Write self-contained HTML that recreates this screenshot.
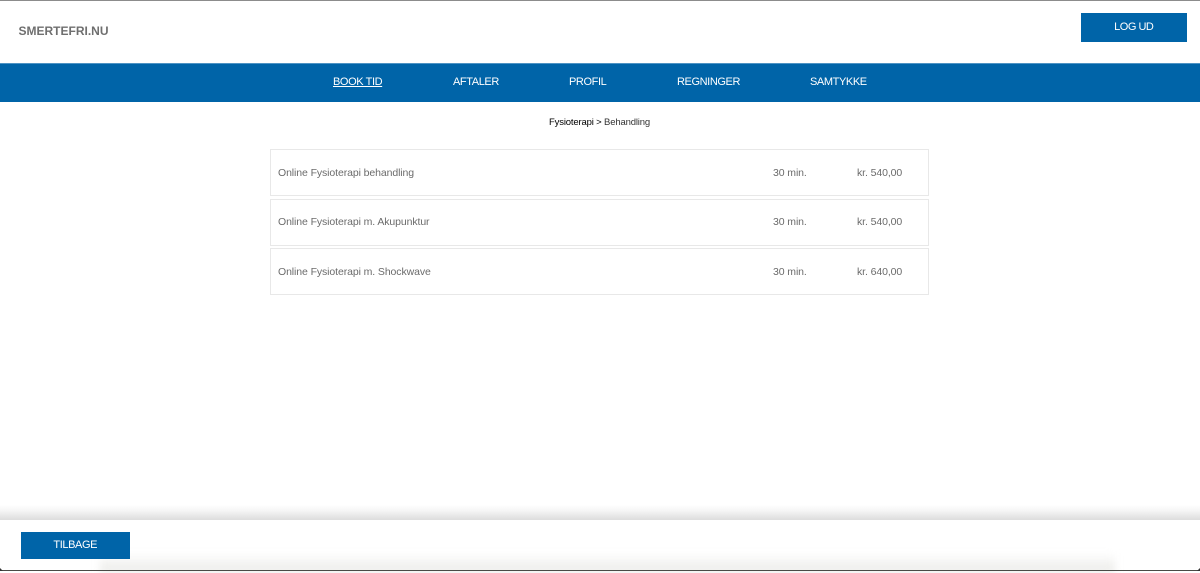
<!DOCTYPE html>
<html lang="da">
<head>
<meta charset="utf-8">
<title>Smertefri.nu</title>
<style>
html,body{margin:0;padding:0;width:1200px;height:571px;overflow:hidden;background:#fff;font-family:"Liberation Sans",Arial,sans-serif;}
.abs{position:absolute;white-space:nowrap;}
#top{position:absolute;left:0;top:0;width:1200px;height:1px;background:#8c8c8c;}
#logo{left:18.5px;top:24px;font-size:12px;line-height:15px;font-weight:bold;color:#6f6f6f;}
#logout{position:absolute;left:1080.5px;top:13px;width:106.5px;height:29px;background:#0064a8;color:#fff;font-size:11px;letter-spacing:-.5px;line-height:28px;text-align:center;}
#nav{position:absolute;left:0;top:63px;width:1200px;height:39px;background:#0064a8;border-top:1px solid #4d93c4;box-sizing:border-box;}
.n{top:76px;font-size:11px;letter-spacing:-.4px;line-height:13px;color:#fff;}
#crumb{left:549px;top:117px;font-size:9.5px;letter-spacing:-.16px;line-height:12px;color:#333;}
#crumb b{font-weight:normal;color:#000;}
.row{position:absolute;left:270px;width:659px;height:47px;box-sizing:border-box;border:1px solid #e8e8e8;background:#fff;}
.t{font-size:10.5px;letter-spacing:-.1px;line-height:13px;color:#6b6b6b;}
#shadow{position:absolute;left:0;top:505px;width:1200px;height:15px;background:linear-gradient(to bottom,#fff 0,#f6f6f6 35%,#dcdcdc 100%);}
#foot{position:absolute;left:0;top:520px;width:1200px;height:50px;background:#fff;}
#fade{position:absolute;left:100px;top:553px;width:1015px;height:20px;background:linear-gradient(to bottom,#fff,#e9e9e6);filter:blur(4px);}
#bottom{position:absolute;left:0;top:570px;width:1200px;height:1px;background:#4a4a46;}
.c{position:absolute;top:568px;width:3px;height:3px;background:#333;}
#back{position:absolute;left:20.5px;top:531.5px;width:109.5px;height:27.5px;background:#0064a8;color:#fff;font-size:11px;letter-spacing:-.4px;line-height:27px;text-align:center;}
</style>
</head>
<body>
<div id="top"></div>
<div class="abs" id="logo">SMERTEFRI.NU</div>
<div id="logout">LOG UD</div>
<div id="nav"></div>
<div class="abs n" style="left:333px;text-decoration:underline;">BOOK TID</div>
<div class="abs n" style="left:453px;">AFTALER</div>
<div class="abs n" style="left:569px;">PROFIL</div>
<div class="abs n" style="left:677px;">REGNINGER</div>
<div class="abs n" style="left:810px;">SAMTYKKE</div>
<div class="abs" id="crumb"><b>Fysioterapi &gt;</b> Behandling</div>
<div class="row" style="top:149px;"></div>
<div class="row" style="top:199px;"></div>
<div class="row" style="top:248px;"></div>
<div class="abs t" style="left:278px;top:167px;">Online Fysioterapi behandling</div>
<div class="abs t" style="left:773px;top:167px;">30 min.</div>
<div class="abs t" style="left:857px;top:167px;">kr. 540,00</div>
<div class="abs t" style="left:278px;top:216px;">Online Fysioterapi m. Akupunktur</div>
<div class="abs t" style="left:773px;top:216px;">30 min.</div>
<div class="abs t" style="left:857px;top:216px;">kr. 540,00</div>
<div class="abs t" style="left:278px;top:266px;">Online Fysioterapi m. Shockwave</div>
<div class="abs t" style="left:773px;top:266px;">30 min.</div>
<div class="abs t" style="left:857px;top:266px;">kr. 640,00</div>
<div id="shadow"></div>
<div id="foot"></div>
<div id="fade"></div>
<div id="bottom"></div>
<div class="c" style="left:0;clip-path:polygon(0 0,100% 100%,0 100%);"></div>
<div class="c" style="left:1197px;clip-path:polygon(100% 0,100% 100%,0 100%);"></div>
<div id="back">TILBAGE</div>
</body>
</html>
